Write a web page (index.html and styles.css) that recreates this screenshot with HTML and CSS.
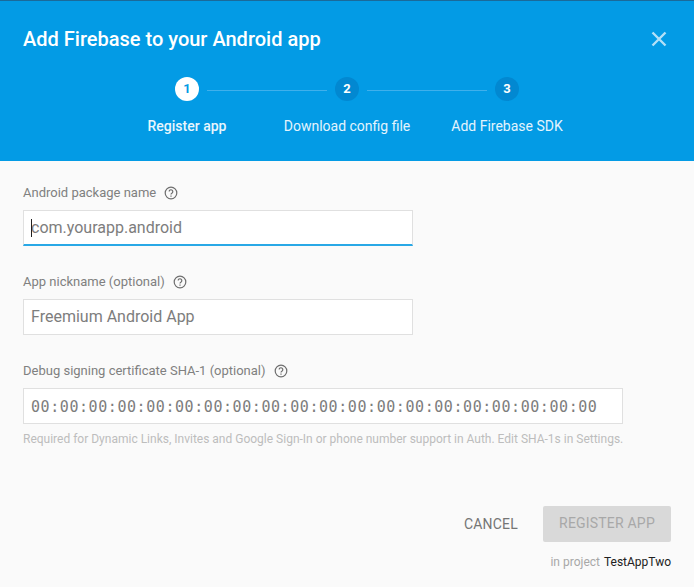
FILE: index.html
```html
<!DOCTYPE html>
<html lang="en">
<head>
<meta charset="utf-8">
<title>Add Firebase to your Android app</title>
<link rel="stylesheet" href="styles.css">
</head>
<body>
<div class="dialog">
  <header class="header">
    <div class="title-row">
      <h1 class="title">Add Firebase to your Android app</h1>
      <svg class="close" viewBox="0 0 16 16" width="16" height="16"><path d="M1.5 1.5l13 13M14.5 1.5l-13 13" fill="none" stroke="#b3e0f7" stroke-width="2.4"/></svg>
    </div>
    <div class="stepper">
      <span class="dot dot-active">1</span><span class="line"></span>
      <span class="dot">2</span><span class="line"></span>
      <span class="dot">3</span>
    </div>
    <div class="labels">
      <span class="label label-active">Register app</span>
      <span class="label">Download config file</span>
      <span class="label">Add Firebase SDK</span>
    </div>
  </header>
  <main class="form">
    <div class="field">
      <div class="field-label">Android package name <svg class="help" viewBox="0 0 14 14" width="14" height="14"><use href="#help"/></svg></div>
      <div class="box box-focus"><span class="caret"></span><span>com.yourapp.android</span></div>
    </div>
    <div class="field">
      <div class="field-label">App nickname (optional) <svg class="help" viewBox="0 0 14 14" width="14" height="14"><use href="#help"/></svg></div>
      <div class="box"><span>Freemium Android App</span></div>
    </div>
    <div class="field field-last">
      <div class="field-label">Debug signing certificate SHA-1 (optional) <svg class="help" viewBox="0 0 14 14" width="14" height="14"><use href="#help"/></svg></div>
      <div class="box box-wide"><span>00:00:00:00:00:00:00:00:00:00:00:00:00:00:00:00:00:00:00:00</span></div>
    </div>
    <p class="hint">Required for Dynamic Links, Invites and Google Sign-In or phone number support in Auth. Edit SHA-1s in Settings.</p>
    <div class="actions">
      <span class="cancel">CANCEL</span>
      <span class="register">REGISTER APP</span>
    </div>
    <p class="project">in project <span class="project-name">TestAppTwo</span></p>
  </main>
</div>
<svg class="defs" width="0" height="0"><defs><g id="help"><circle cx="7" cy="7" r="5.8" fill="none" stroke="#6e6e6e" stroke-width="1.2"/><path d="M5.2 5.6a1.8 1.8 0 1 1 2.9 1.4c-.7.5-1.1.8-1.1 1.6" fill="none" stroke="#6e6e6e" stroke-width="1.2"/><path d="M6.4 9.6h1.2v1.2H6.4z" fill="#6e6e6e"/></g></defs></svg>
</body>
</html>
```
FILE: styles.css
```css
* { box-sizing: border-box; }
html, body { margin: 0; padding: 0; }
body { background: #fafafa; font-family: Roboto, sans-serif; overflow: hidden; }
.dialog { width: 694px; height: 587px; background: #fafafa; }
.header { height: 161px; background: #039be5; border-top: 1px solid #1a6a9a; color: #fff; }
.title-row { display: flex; justify-content: space-between; align-items: flex-start; padding: 24px 27px 0 23px; height: 76px; }
.title { margin: 0; font-size: 20px; line-height: 28px; font-weight: 500; }
.close { margin-top: 6px; }
.stepper { display: flex; align-items: center; padding-left: 175px; height: 24px; }
.dot { width: 24px; height: 24px; border-radius: 50%; background: #0288d1; font-size: 13px; font-weight: 700; line-height: 24px; text-align: center; }
.dot-active { background: #fff; color: #039be5; }
.line { width: 120px; height: 1px; margin: 2px 8px 0; background: #3fb0ec; }
.labels { display: flex; padding-left: 107px; margin-top: 15px; }
.label { width: 160px; text-align: center; font-size: 14px; line-height: 20px; color: #e3f4fd; }
.label-active { font-weight: 500; color: #e9f6fd; }
.form { padding: 23px 23px 0; }
.field { margin-bottom: 27px; }
.field-last { margin-bottom: 0; }
.field-label { display: flex; align-items: center; gap: 8px; height: 17px; margin-bottom: 9px; font-size: 13px; line-height: 17px; color: #808080; }
.help { flex: none; }
.box { position: relative; display: flex; align-items: center; width: 390px; height: 36px; padding: 0 0 1px 7px; background: #fff; border: 1px solid #e0e0e0; font-size: 16px; color: #7d7d7d; }
.box-focus { padding-bottom: 0; border-bottom: 2px solid #29a8e6; }
.caret { position: absolute; left: 7px; top: 8px; width: 1px; height: 18px; background: #212121; }
.box-wide { width: 600px; padding: 1px 0 0 7px; font-family: "DejaVu Sans Mono", monospace; font-size: 15px; letter-spacing: .57px; }
.hint { margin: 6px 0 0; font-size: 12px; line-height: 18px; color: #bdbdbd; }
.actions { display: flex; justify-content: flex-end; align-items: center; gap: 25px; margin-top: 58px; }
.cancel { padding-bottom: 1px; font-size: 14px; letter-spacing: .2px; color: #757575; }
.register { width: 128px; height: 36px; border-radius: 2px; background: #d9d9d9; color: #a8a8a8; font-size: 14px; letter-spacing: .2px; line-height: 35px; text-align: center; }
.project { margin: 11px 0 0; text-align: right; font-size: 12px; line-height: 18px; color: #a8a8a8; }
.project-name { margin-left: 1px; color: #212121; }
.defs { position: absolute; }
```
